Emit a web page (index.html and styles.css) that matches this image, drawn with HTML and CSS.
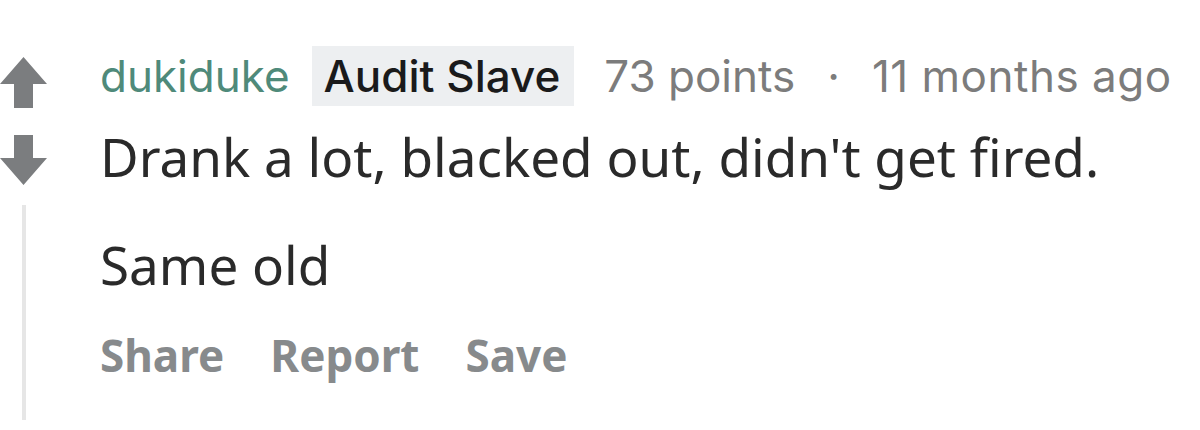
FILE: index.html
```html
<!DOCTYPE html>
<html lang="en">
  <head>
    <meta charset="UTF-8" />
    <meta name="viewport" content="width=device-width, initial-scale=1.0" />
    <title>Comment</title>
    <link rel="stylesheet" href="styles.css">
  </head>
  <body>
    <div class="comment">
      <div class="votes">
        <svg class="arrow" width="47" height="51" viewBox="0 0 47 51">
          <path d="M23.5 0 L47 27 L33 27 L33 51 L14 51 L14 27 L0 27 Z" />
        </svg>
        <svg class="arrow down" width="47" height="50" viewBox="0 0 47 50">
          <path d="M14 0 L33 0 L33 23 L47 23 L23.5 50 L0 23 L14 23 Z" />
        </svg>
        <div class="thread-line"></div>
      </div>
      <div class="content">
        <div class="meta">
          <span class="author">dukiduke</span>
          <span class="flair">Audit Slave</span>
          <span class="points">73 points</span>
          <span class="dot">&middot;</span>
          <span class="time">11 months ago</span>
        </div>
        <div class="body">
          <p>Drank a lot, blacked out, didn't get fired.</p>
          <p>Same old</p>
        </div>
        <div class="actions">
          <span class="action">Share</span>
          <span class="action">Report</span>
          <span class="action">Save</span>
        </div>
      </div>
    </div>
  </body>
</html>
```

FILE: styles.css
```css
* {
  padding: 0;
  margin: 0;
}
body {
  background-color: #fff;
  font-family: "Noto Sans", sans-serif;
}
.comment {
  display: flex;
  height: 420px;
}
.votes {
  width: 47px;
  display: flex;
  flex-direction: column;
  align-items: center;
  padding-top: 57px;
}
.arrow {
  fill: #7b7d7f;
  display: block;
}
.arrow.down {
  margin-top: 27px;
}
.thread-line {
  flex: 1;
  width: 4px;
  margin-top: 20px;
  background-color: #e6e6e6;
}
.content {
  margin-left: 53px;
  padding-top: 45px;
}
.meta {
  display: flex;
  align-items: center;
  height: 62px;
  font-family: Inter, sans-serif;
  font-size: 44px;
  color: #7c7c7c;
  white-space: nowrap;
}
.author {
  color: #4f8a7a;
}
.flair {
  margin-left: 22px;
  padding: 0 14px 0 12px;
  line-height: 60px;
  background-color: #edeff1;
  color: #1a1a1b;
  font-weight: 500;
}
.points {
  margin-left: 30px;
}
.dot {
  margin: 0 32px;
}
.time {
  letter-spacing: 0.5px;
}
.body {
  margin-top: 11px;
  font-size: 53px;
  line-height: 78px;
  color: #2a2a2a;
}
.body p + p {
  margin-top: 30px;
}
.actions {
  display: flex;
  gap: 46px;
  margin-top: 20px;
  line-height: 62px;
  font-size: 44px;
  font-weight: 700;
  color: #878a8c;
}
```
